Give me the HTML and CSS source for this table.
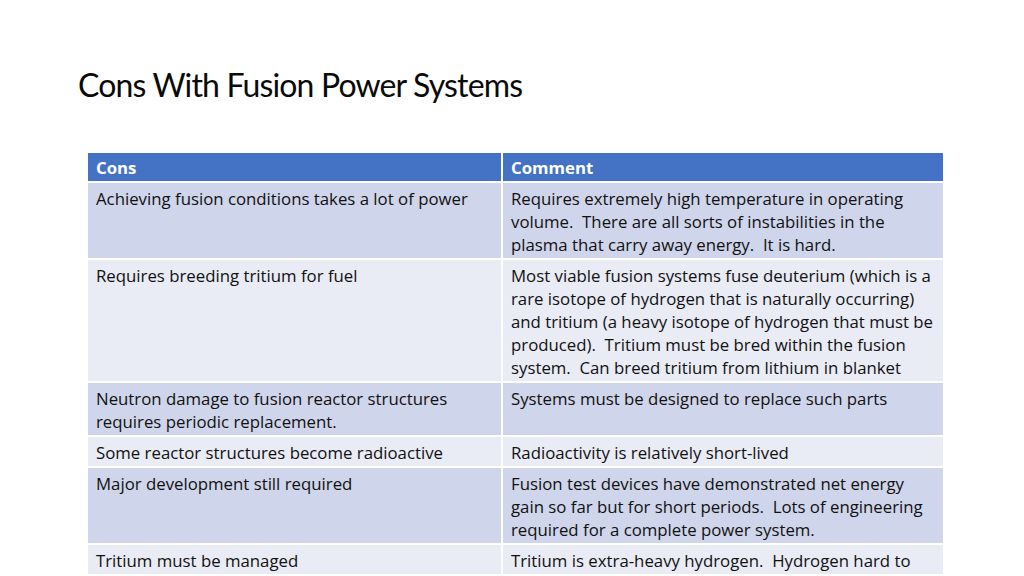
FILE: index.html
```html
<!DOCTYPE html>
<html>
<head>
<meta charset="utf-8">
<link rel="stylesheet" href="styles.css">
</head>
<body>
<div class="slide">
  <h1 class="title">Cons With Fusion Power Systems</h1>
  <table class="cons">
    <colgroup><col class="c1"><col class="c2"></colgroup>
    <thead>
      <tr><th>Cons</th><th>Comment</th></tr>
    </thead>
    <tbody>
      <tr class="band1">
        <td>Achieving fusion conditions takes a lot of power</td>
        <td>Requires extremely high temperature in operating<br>volume.&nbsp; There are all sorts of instabilities in the<br>plasma that carry away energy.&nbsp; It is hard.</td>
      </tr>
      <tr class="band2">
        <td>Requires breeding tritium for fuel</td>
        <td>Most viable fusion systems fuse deuterium (which is a<br>rare isotope of hydrogen that is naturally occurring)<br>and tritium (a heavy isotope of hydrogen that must be<br>produced).&nbsp; Tritium must be bred within the fusion<br>system.&nbsp; Can breed tritium from lithium in blanket</td>
      </tr>
      <tr class="band1">
        <td>Neutron damage to fusion reactor structures<br>requires periodic replacement.</td>
        <td>Systems must be designed to replace such parts</td>
      </tr>
      <tr class="band2">
        <td>Some reactor structures become radioactive</td>
        <td>Radioactivity is relatively short-lived</td>
      </tr>
      <tr class="band1">
        <td>Major development still required</td>
        <td>Fusion test devices have demonstrated net energy<br>gain so far but for short periods.&nbsp; Lots of engineering<br>required for a complete power system.</td>
      </tr>
      <tr class="band2">
        <td>Tritium must be managed</td>
        <td>Tritium is extra-heavy hydrogen.&nbsp; Hydrogen hard to</td>
      </tr>
    </tbody>
  </table>
</div>
</body>
</html>
```
FILE: styles.css
```css
html, body {
  margin: 0;
  padding: 0;
  background: #ffffff;
}
body {
  width: 1024px;
  height: 576px;
  overflow: hidden;
}
.slide {
  padding: 64px 0 0 78px;
  font-family: "Open Sans", Lato, sans-serif;
  color: #000;
}
.title {
  margin: 0;
  font-family: Lato, "Open Sans", sans-serif;
  font-weight: 400;
  font-size: 32px;
  line-height: 42px;
  letter-spacing: -0.85px;
  color: #0a0a0a;
}
.cons {
  margin: 47px 0 0 10px;
  width: 855px;
  border-collapse: collapse;
  table-layout: fixed;
  font-size: 16.8px;
  line-height: 23px;
  color: #111;
}
.c1 { width: 414px; }
.c2 { width: 441px; }
.cons th, .cons td {
  text-align: left;
  vertical-align: top;
  padding: 4px 6px 2px 8px;
  border: 2px solid #ffffff;
  border-top: none;
  white-space: nowrap;
}
.cons tr > :first-child { border-left: none; }
.cons tr > :last-child { border-right: none; }
.cons th {
  background: #4472c4;
  color: #ffffff;
  font-weight: 700;
  padding-top: 3px;
  padding-bottom: 2px;
}
.band1 td { background: #cfd5ea; }
.band2 td { background: #e9ebf5; }
```
